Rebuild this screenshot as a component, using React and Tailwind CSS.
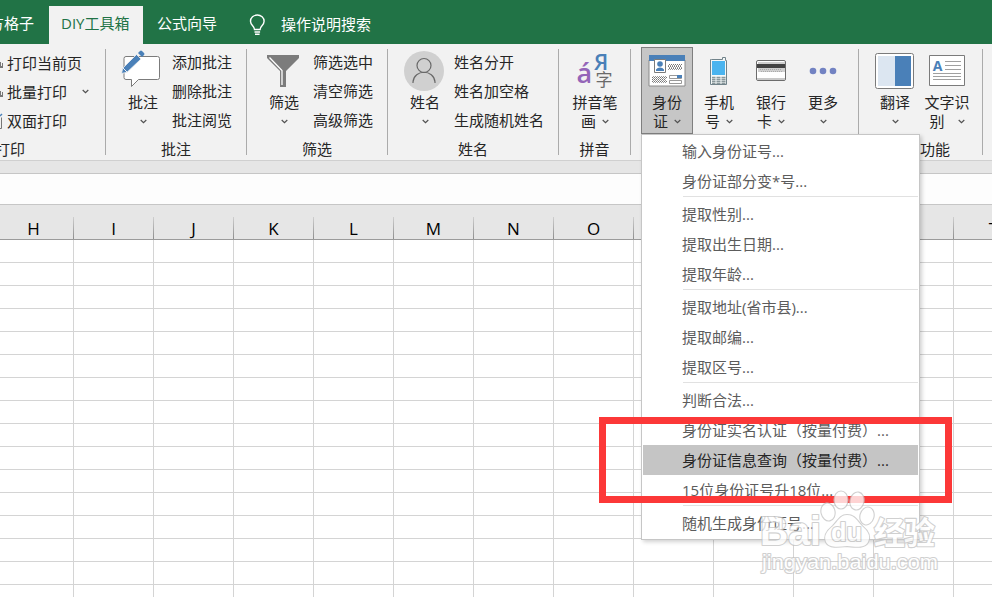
import React from "react";

const FONT = "font-['Open_Sans','Noto_Sans_CJK_SC',sans-serif]";

function Chevron({ className = "" }) {
  return (
    <svg className={`shrink-0 ${className}`} width="7" height="5" viewBox="0 0 7 5" fill="none">
      <path d="M.7 1l2.8 2.6L6.300 1" stroke="#505050" strokeWidth="1.2" />
    </svg>
  );
}

function Group({ width, label, labelClass = "justify-center", children }) {
  return (
    <div className={`${width} h-[106px] shrink-0 border-r border-[#ababab]`}>
      <div className="flex h-[90px]">{children}</div>
      <div className={`flex h-5 leading-5 ${labelClass}`}>{label}</div>
    </div>
  );
}

function BigButton({ x, lines, gap = "gap-[6px]", className = "", children }) {
  const [first, second] = lines;
  return (
    <div className={`flex w-[52px] shrink-0 flex-col items-center ${className}`}>
      <svg width="52" height="44" viewBox={`${x} 49 52 44`} className="shrink-0">
        {children}
      </svg>
      <div className="h-[19px] leading-[19px]">{first}</div>
      <div className={`flex h-[19px] items-center leading-[19px] ${second ? gap : ""}`}>
        {second && <span>{second}</span>}
        <Chevron />
      </div>
    </div>
  );
}

function SmallList({ items, className = "" }) {
  return (
    <div className={`-mt-px shrink-0 ${className}`}>
      {items.map((t) => (
        <div key={t} className="h-[29px] leading-[28px]">{t}</div>
      ))}
    </div>
  );
}

function PrintList() {
  return (
    <div className="-mt-px">
      <div className="flex h-[29px] items-center">
        <svg width="7" height="20" viewBox="0 0 7 20" className="shrink-0">
          <path d="M0 9h1v5H0zM2 10h1v5H0v-2h2z" fill="#777" />
        </svg>
        <span className="leading-[28px]">打印当前页</span>
      </div>
      <div className="flex h-[29px] items-center">
        <svg width="7" height="20" viewBox="0 0 7 20" className="shrink-0">
          <path d="M0 9h1v5H0zM2 10h1v5H0v-2h2z" fill="#777" />
        </svg>
        <span className="leading-[28px]">批量打印</span>
        <Chevron className="ml-[15px]" />
      </div>
      <div className="flex h-[29px] items-center">
        <svg width="7" height="20" viewBox="0 0 7 20" className="shrink-0">
          <path d="M0 17.500h1.500V6.500" fill="none" stroke="#777" />
          <path d="M0 5l2-2" stroke="#4a80b8" strokeWidth="1.500" />
        </svg>
        <span className="leading-[28px]">双面打印</span>
      </div>
    </div>
  );
}

function Ribbon() {
  return (
    <div className="flex h-[117px] shrink-0 border-b border-[#d0d0d0] bg-[#f2f2f2] pt-[5px] text-[#262626]">
      <Group width="w-[106px]" label={<span className="-ml-[5px]">打印</span>} labelClass="">
        <PrintList />
      </Group>
      <Group width="w-[141px]" label="批注">
        <BigButton x={117} lines={["批注"]} className="ml-[11px]">
          <path d="M126 56.500h31.500a2 2 0 0 1 2 2V77.500a2 2 0 0 1-2 2H138.500L131.500 86.500V79.500H126a2 2 0 0 1-2-2v-19a2 2 0 0 1 2-2z" fill="#fff" stroke="#7b7b7b" />
          <path d="M121.500 73.500l1.200-5.200L136.500 54.500l4.500 4.500L127 72.300z" fill="#4a80b8" stroke="#f2f2f2" strokeWidth=".8" />
          <path d="M138 53l2-2q1-1 2 0l2 2q1 1 0 2l-2 2z" fill="#4a80b8" />
          <path d="M123 68l4 4" stroke="#f2f2f2" />
        </BigButton>
        <SmallList className="ml-[3px]" items={["添加批注", "删除批注", "批注阅览"]} />
      </Group>
      <Group width="w-[141px]" label="筛选">
        <BigButton x={258} lines={["筛选"]} className="ml-[11px]">
          <path d="M267 55h32v3L286 71v16h-6V71L267 58z" fill="#7c7c7c" />
          <path d="M269.500 57.500L282 70.500V85" fill="none" stroke="#fff" strokeWidth="1.300" />
        </BigButton>
        <SmallList className="ml-[3px]" items={["筛选选中", "清空筛选", "高级筛选"]} />
      </Group>
      <Group width="w-[171px]" label="姓名">
        <BigButton x={399} lines={["姓名"]} className="ml-[11px]">
          <circle cx="424" cy="71" r="20" fill="#d0d0d0" />
          <circle cx="424" cy="65.500" r="7" fill="none" stroke="#686868" strokeWidth="1.200" />
          <path d="M413 83v-1c1-13 21-13 22 0v1" fill="none" stroke="#686868" strokeWidth="1.200" />
        </BigButton>
        <SmallList className="ml-[3px]" items={["姓名分开", "姓名加空格", "生成随机姓名"]} />
      </Group>
      <Group width="w-[72px]" label="拼音">
        <BigButton x={569} lines={["拼音笔", "画"]} className="ml-[10px]">
          <text x="576.500" y="83" fontSize="27" fill="#9465b8" fontFamily="Open Sans" fontWeight="600">á</text>
          <text x="594" y="70" fontSize="22" fill="#4a80b8" fontFamily="Open Sans" fontWeight="600">Я</text>
          <text x="595.500" y="85.500" fontSize="17" fill="#6a6a6a" fontFamily="Noto Sans CJK SC">字</text>
        </BigButton>
      </Group>
      <Group width="w-[228px]" label="">
        <div className="ml-[10px] flex">
          <div className="-mt-[2px] flex h-[87px] w-[52px] border border-[#7f7f7f] bg-[#c6c6c6] pt-px">
            <BigButton x={641} lines={["身份", "证"]} className="-ml-px">
              <path d="M649 55h36v31h-36z" fill="#fff" stroke="none" />
              <path d="M649 60v26h36v-26" fill="none" stroke="#8a8a8a" />
              <path d="M649 55h36v6h-36z" fill="#4a80b8" />
              <path d="M654.500 59.500h11v13h-11z" fill="#fff" stroke="#7b7b7b" />
              <circle cx="660" cy="64" r="2.800" fill="#4a80b8" />
              <path d="M656 71v-1.500q1.500-2 4-2t4 2V71z" fill="#4a80b8" />
              <path d="M669 64.500h13M668 66.500h13M669 68.500h13M652 77.500h15M652 79.500h14M652 81.500h15" stroke="#777" strokeDasharray="1 1" />
              <path d="M668 65.500h13M669 67.500h13M668 69.500h13M653 76.500h14M653 78.500h14M653 80.500h14M653 82.500h14" stroke="#999" strokeDasharray="1 1" />
              <path d="M669.500 75.500h12v3h-12zM669.500 80.500h12v3h-12z" fill="#fff" stroke="#999" />
              <path d="M677 75h5v3h-5z" fill="#4a80b8" />
            </BigButton>
          </div>
          <BigButton x={693} lines={["手机", "号"]}>
            <path d="M711.500 59.500h11V57.500h3V60.500h1V84.500h-16v-25z" fill="#f4f8f8" stroke="#71838a" />
            <path d="M712 61h13v14h-13z" fill="#4ab4ef" />
            <path d="M712 77.500h3.500m1 0h4m1 0h4M712 79.500h3.500m1 0h4m1 0h4M712 81.500h3.500m1 0h4m1 0h4M712 83.300h3.500m1 0h4m1 0h4" stroke="#89979b" strokeWidth="1.300" />
          </BigButton>
          <BigButton x={745} lines={["银行", "卡"]}>
            <rect x="756.500" y="60.500" width="29" height="20" rx="1.500" fill="#fff" stroke="#6c6c6c" />
            <path d="M758 62h27v2h-27zM758 68h27v4h-27z" fill="#d0d0d0" />
            <path d="M757 64h28v4h-28z" fill="#444" />
            <path d="M760 69.500h22M761 71.500h22" stroke="#aaa" strokeDasharray="1 1" />
            <path d="M757 78h28v2h-28z" fill="#c8c8c8" />
          </BigButton>
          <BigButton x={797} lines={["更多"]}>
            <circle cx="813" cy="71" r="3.300" fill="#7282c2" />
            <circle cx="823" cy="71" r="3.300" fill="#7282c2" />
            <circle cx="833" cy="71" r="3.300" fill="#7282c2" />
          </BigButton>
        </div>
      </Group>
      <Group width="w-[124px]" label="功能" labelClass="pl-[61px]">
        <BigButton x={869} lines={["翻译"]} className="ml-[10px]">
          <rect x="875.500" y="53.500" width="38" height="35" rx="2" fill="#fff" stroke="#7b7b7b" />
          <path d="M878 56h17v30h-17z" fill="#dce6f1" />
          <path d="M895 56h16v30h-16z" fill="#4a80b8" />
        </BigButton>
        <BigButton x={921} lines={["文字识", "别"]} gap="gap-[13px]">
          <path d="M929.500 55.500h35v30h-35z" fill="#fff" stroke="#7b7b7b" />
          <text x="932.800" y="71" fontSize="14" fontWeight="700" fill="#4a80b8" fontFamily="Open Sans">A</text>
          <path d="M945 61.500h16M945 65.500h16M945 69.500h16M933 73.500h28M933 76.500h28M933 79.500h28" stroke="#a0a0a0" />
        </BigButton>
      </Group>
    </div>
  );
}

function TitleBar() {
  return (
    <div className="flex h-11 shrink-0 items-end bg-[#217346] text-white">
      <div className="-ml-[11px] h-[38px] w-[60px] shrink-0 leading-[35px]">方格子</div>
      <div className="h-[38px] w-[94px] shrink-0 bg-[#f2f2f2] pl-3 leading-[35px] text-[#217346]">DIY工具箱</div>
      <div className="ml-[14px] h-[38px] leading-[35px]">公式向导</div>
      <svg className="mb-[8px] ml-[32px] shrink-0" width="17" height="22" viewBox="0 0 17 22" fill="none" stroke="#fff">
        <path d="M5.500 15.500c0-3.500-4-4-4-8.200a6.800 6.300 0 0 1 13.600 0c0 4.200-4 4.700-4 8.200z" strokeWidth="1.400" />
        <path d="M5.500 18h5.600M6 20.300h4.600" strokeWidth="1.500" />
      </svg>
      <div className="ml-[15px] h-[38px] leading-[37px]">操作说明搜索</div>
    </div>
  );
}

const COLUMNS = ["H", "I", "J", "K", "L", "M", "N", "O", "P", "Q", "R", "S", "T"];

function Sheet() {
  return (
    <div className="flex-1 overflow-hidden bg-white">
      <div className="w-[1040px] -ml-[6px]">
        <div className="flex h-[35px] items-end border-b border-[#9b9b9b] bg-[#e6e6e6] text-[17px] text-black">
          {COLUMNS.map((c) => (
            <div key={c} className="flex h-[22px] w-20 shrink-0">
              <div className="w-[79px] text-center font-['Open_Sans'] leading-[23px]">{c}</div>
              <div className="w-px bg-linear-to-b from-[#cfcfcf] to-[#8f8f8f]" />
            </div>
          ))}
        </div>
        {Array.from({ length: 16 }, (_, r) => (
          <div key={r} className="flex h-[23px]">
            {COLUMNS.map((c) => (
              <div key={c} className="w-20 shrink-0 border-r border-b border-[#d4d4d4]" />
            ))}
          </div>
        ))}
      </div>
    </div>
  );
}

const MENU = [
  ["输入身份证号...", "身份证部分变*号..."],
  ["提取性别...", "提取出生日期...", "提取年龄..."],
  ["提取地址(省市县)...", "提取邮编...", "提取区号..."],
  ["判断合法...", "身份证实名认证（按量付费）...", "身份证信息查询（按量付费）...", "15位身份证号升18位..."],
  ["随机生成身份证号..."],
];

function Menu() {
  return (
    <div className="absolute top-[134px] left-[641px] w-[279px] border border-[#c6c6c6] bg-white p-px pr-0 text-[#5c5c5c] shadow-[2px_2px_4px_rgba(0,0,0,0.18)]">
      {MENU.map((section, i) => (
        <React.Fragment key={i}>
          {i > 0 && <div className="mr-px ml-[40px] h-[3px] border-t border-[#e1e1e1]" />}
          {section.map((t) => (
            <div
              key={t}
              className={`mr-px h-[30px] pl-[39px] leading-[30px] whitespace-nowrap ${t.includes("查询") ? "bg-[#c5c5c5] text-[#262626]" : ""}`}
            >
              {t}
            </div>
          ))}
        </React.Fragment>
      ))}
    </div>
  );
}

function Watermark() {
  return (
    <svg className="absolute top-[485px] left-[752px]" width="200" height="95" viewBox="752 485 200 95">
      <g fill="#fff" stroke="#c4c4c4" strokeWidth="2.200" strokeLinejoin="round" paintOrder="stroke" opacity=".78">
        <text x="760" y="545" fontSize="41" fontWeight="700" fontFamily="Liberation Sans" textLength="61" lengthAdjust="spacingAndGlyphs">Bai</text>
        <text x="874" y="544" fontSize="31" fontWeight="700" fontFamily="Noto Sans CJK SC" textLength="61">经验</text>
        <ellipse cx="828" cy="512" rx="6.500" ry="8.500" transform="rotate(-12 828 512)" />
        <ellipse cx="841" cy="500" rx="6.500" ry="8.500" />
        <ellipse cx="857" cy="501" rx="6.500" ry="8.500" transform="rotate(12 857 501)" />
        <ellipse cx="867" cy="516" rx="6.500" ry="8.500" transform="rotate(15 867 516)" />
        <path d="M847 515c8 0 10 6 15 11 6 5 9 10 6 16-3 6-11 5-21 4-9 1-18 2-21-4-3-7 2-12 7-16 5-5 7-11 14-11z" />
        <text x="831" y="541" fontSize="25" fontWeight="700" fontFamily="Liberation Sans" textLength="31" lengthAdjust="spacingAndGlyphs">du</text>
        <text x="762" y="569" fontSize="21" fontFamily="Liberation Sans" textLength="176" lengthAdjust="spacingAndGlyphs">jingyan.baidu.com</text>
      </g>
    </svg>
  );
}

export default function App() {
  return (
    <div className={`relative flex h-[597px] w-[992px] flex-col overflow-hidden text-[15px] ${FONT}`}>
      <TitleBar />
      <Ribbon />
      <div className="h-[13px] shrink-0 border-b border-[#c6c6c6] bg-[#e6e6e6]" />
      <div className="h-[31px] shrink-0 border-b border-[#c6c6c6] bg-[#fdfdfd]" />
      <Sheet />
      <Menu />
      <div className="absolute top-[417px] left-[599px] h-[86px] w-[353px] border-7 border-[#fc3838]" />
      <Watermark />
    </div>
  );
}
